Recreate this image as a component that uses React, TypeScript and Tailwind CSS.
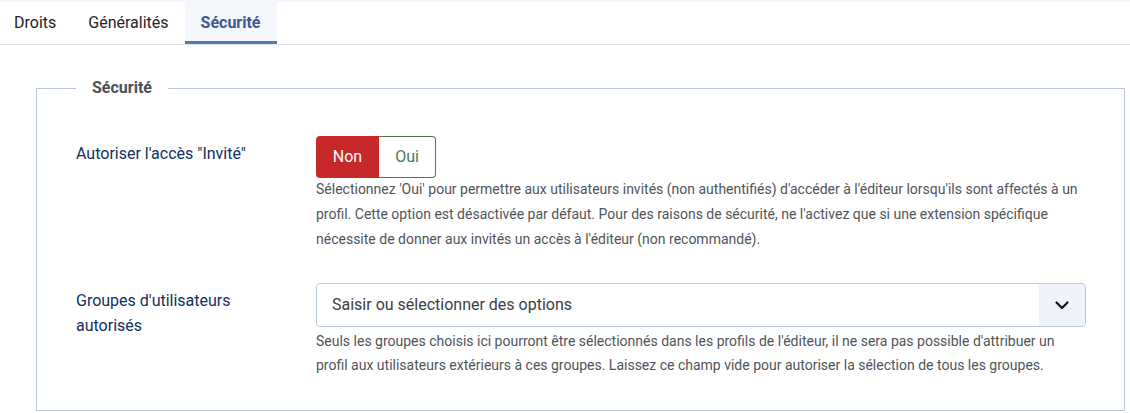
import React from 'react';

const Tab: React.FC<{ label: string; active?: boolean }> = ({ label, active }) => {
    return (
        <div
            className={
                active
                    ? 'h-full flex items-center px-4 bg-[#f3f6fa] border-b-[3px] border-[#5b78a3] text-[#3d5b8a] font-bold pt-[3px]'
                    : 'h-full flex items-center px-4 text-[#1f2328]'
            }
        >
            {label}
        </div>
    );
};

export default function App() {
    return (
        <div className="w-[1130px] h-[413px] bg-white overflow-hidden font-['Roboto',sans-serif] text-[16px]">
            {/* Tabs */}
            <div className="h-[45px] border-t-2 border-t-[#f4f6fa] border-b border-b-[#dbe3ee] flex items-stretch -ml-0.5">
                <Tab label="Droits" />
                <Tab label="Généralités" />
                <Tab label="Sécurité" active />
            </div>

            {/* Content */}
            <div className="pt-[31px] pl-9 pr-[5px]">
                <fieldset className="border border-[#b9c7dc] pl-[39px] pr-[38px] pb-[33px]">
                    <legend className="px-4 font-bold text-[#495057] leading-6">Sécurité</legend>

                    {/* Guest access */}
                    <div className="flex mt-[36px]">
                        <div className="w-[240px] shrink-0 pt-[6px] text-[#132f5c] leading-6">
                            Autoriser l'accès "Invité"
                        </div>
                        <div className="flex-1">
                            <div className="flex h-[42px] w-[120px]">
                                <div className="w-[63px] flex items-center justify-center bg-[#c7292a] text-white rounded-l-[4px]">
                                    Non
                                </div>
                                <div className="flex-1 flex items-center justify-center border border-[#467a52] border-l-0 text-[#467a52] rounded-r-[4px]">
                                    Oui
                                </div>
                            </div>
                            <p className="text-[14px] text-[#4f5459] leading-[25px] mt-[-1px] whitespace-nowrap">
                                Sélectionnez 'Oui' pour permettre aux utilisateurs invités (non authentifiés) d'accéder à l'éditeur lorsqu'ils sont affectés à un
                                <br />
                                profil. Cette option est désactivée par défaut. Pour des raisons de sécurité, ne l'activez que si une extension spécifique
                                <br />
                                nécessite de donner aux invités un accès à l'éditeur (non recommandé).
                            </p>
                        </div>
                    </div>

                    {/* Allowed groups */}
                    <div className="flex mt-[31px]">
                        <div className="w-[240px] shrink-0 pt-[5px] pr-12 text-[#132f5c] leading-[25px]">
                            Groupes d'utilisateurs autorisés
                        </div>
                        <div className="flex-1">
                            <div className="flex h-[44px] border border-[#b9c7dc] rounded-[4px] overflow-hidden">
                                <div className="flex-1 flex items-center pl-[15px] text-[#3b4046]">
                                    Saisir ou sélectionner des options
                                </div>
                                <div className="w-[46px] flex items-center justify-center bg-[#eef3fa]">
                                    <svg width="16" height="16" viewBox="0 0 16 16" fill="none" stroke="#111" strokeWidth="2.2" strokeLinecap="round" strokeLinejoin="round">
                                        <path d="M2.5 5.5 8 11l5.5-5.5" />
                                    </svg>
                                </div>
                            </div>
                            <p className="text-[14px] text-[#4f5459] leading-[24px] mt-[2px] whitespace-nowrap">
                                Seuls les groupes choisis ici pourront être sélectionnés dans les profils de l'éditeur, il ne sera pas possible d'attribuer un
                                <br />
                                profil aux utilisateurs extérieurs à ces groupes. Laissez ce champ vide pour autoriser la sélection de tous les groupes.
                            </p>
                        </div>
                    </div>
                </fieldset>
            </div>
        </div>
    );
}
